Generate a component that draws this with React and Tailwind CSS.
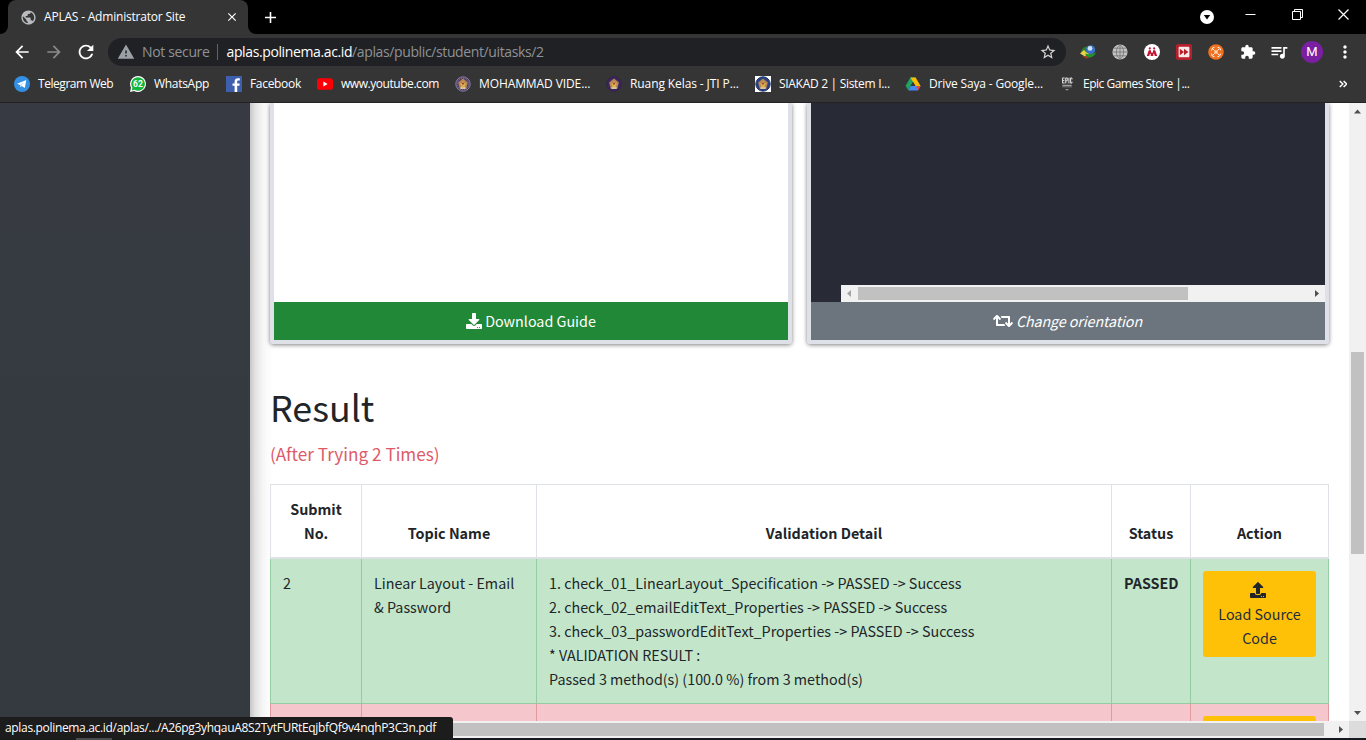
import React from "react";
import {
  MdArrowBack, MdArrowForward, MdRefresh, MdWarning, MdStarBorder, MdExtension,
  MdQueueMusic, MdMoreVert, MdPublic, MdClose, MdAdd,
} from "react-icons/md";
import { FaDownload, FaUpload, FaRetweet } from "react-icons/fa";

const ui = "font-['Open_Sans','Noto_Sans',sans-serif]";
const page = "font-['Noto_Sans_CJK_SC','Open_Sans',sans-serif]";

function Telegram() {
  return (
    <svg className="size-4" viewBox="0 0 16 16">
      <circle cx="8" cy="8" r="8" fill="#3390e5" />
      <path d="M3 7.8 12.3 4 10.8 12 7.6 9.9 6.3 11.3 6 9Z" fill="#fff" />
      <path d="M6 9 10.5 5.8 7.2 9.5 6.4 11Z" fill="#a9cdf0" />
    </svg>
  );
}

function WhatsApp() {
  return (
    <svg className="size-4" viewBox="0 0 16 16">
      <path d="M8 0a8 8 0 1 1-3.9 15L0 16l1-4.2A8 8 0 0 1 8 0Z" fill="#fff" />
      <path d="M8 1.2a6.8 6.8 0 1 1-3.5 12.6l-2.8.7.7-2.8A6.8 6.8 0 0 1 8 1.2Z" fill="#13b53c" />
      <text x="8" y="11" textAnchor="middle" fontSize="8.5" fontWeight="700" fill="#fff" fontFamily="Roboto, sans-serif">62</text>
    </svg>
  );
}

function Facebook() {
  return (
    <svg className="size-4" viewBox="0 0 16 16">
      <path d="M0 0h16v16H0Z" fill="#3d5fae" />
      <path d="M8.6 16V9.8H6.5V7.4h2.1V5.6c0-2.2 1.3-3.4 3.3-3.4.9 0 1.6.1 1.9.1v2.2h-1.3c-1 0-1.3.5-1.3 1.3v1.6h2.5l-.3 2.4h-2.2V16Z" fill="#fff" />
    </svg>
  );
}

function Youtube() {
  return (
    <svg className="size-4" viewBox="0 0 16 16">
      <rect x="0" y="2.2" width="16" height="11.6" rx="2.6" fill="#fb0007" />
      <path d="M6.4 5.6v4.8L10.6 8Z" fill="#fff" />
    </svg>
  );
}

function Crest({ ring, field, square }) {
  return (
    <svg className="size-4" viewBox="0 0 16 16">
      {square && <rect width="16" height="16" fill="#fff" />}
      <circle cx="8" cy="8" r="7.2" fill={field} stroke={ring} strokeWidth="1" />
      <circle cx="8" cy="8" r="5.8" fill="none" stroke={ring} strokeWidth=".7" strokeDasharray="1.4 .8" />
      <path d="M8 2.6 12.8 6.4 11.2 12.8H4.8L3.2 6.4Z" fill="#b98552" />
      <path d="M8 4.4 9.2 7.2 11.4 7.4 9.8 9.2 10 11.6H6L6.2 9.2 4.6 7.4 6.8 7.2Z" fill="#d9b04e" />
      <path d="M5.4 11.4h5.2v1.4H5.4Z" fill="#e8d9b0" />
      <circle cx="8" cy="7.6" r="1.1" fill="#a0403c" />
    </svg>
  );
}

function Drive() {
  return (
    <svg className="size-4" viewBox="0 0 16 16">
      <path d="M5.4 1.6h5.2L8 6.1 3.2 14.2.6 9.8Z" fill="#1fa463" />
      <path d="M5.4 1.6h5.2l5 8.4h-5.1Z" fill="#fbbc05" />
      <path d="M5.8 10h9.8L13 14.4H3.2Z" fill="#4688f4" />
      <path d="M8 6.1 10.4 10H5.7Z" fill="#36363a" />
      <path d="m13 14.4 2.6-4.4h-3.1l-1.2 1.4Z" fill="#ea4335" />
    </svg>
  );
}

function Epic() {
  return (
    <svg className="size-4" viewBox="0 0 16 16">
      <path d="M3 1h10v11H3Z" fill="#4a4a4a" />
      <path d="M3.5 2v5M3.5 2h2M3.5 4.5h1.7M3.5 7h2M6.7 7.3V2h1.6v2.8H6.7M9.9 2v5.3M13 3.4V2h-1.5v5H13V5.7" stroke="#d5d5d5" strokeWidth="1" fill="none" />
      <path d="M3.5 9.7h9" stroke="#a5a5a5" strokeWidth="1.3" />
      <path d="M6 13.2h4l-2 1.3Z" fill="#bcbcbc" />
    </svg>
  );
}

const bookmarks = [
  { w: "w-[116px]", t: "tracking-[-0.45px]", label: "Telegram Web", icon: <Telegram /> },
  { w: "w-[96px]", t: "tracking-[-0.3px]", label: "WhatsApp", icon: <WhatsApp /> },
  { w: "w-[91px]", t: "tracking-[-0.32px]", label: "Facebook", icon: <Facebook /> },
  { w: "w-[138px]", t: "tracking-[-0.45px]", label: "www.youtube.com", icon: <Youtube /> },
  { w: "w-[151px]", t: "tracking-[-0.1px]", label: "MOHAMMAD VIDE...", icon: <Crest ring="#8c7aa8" field="#4b4060" /> },
  { w: "w-[149px]", t: "tracking-[-0.1px]", label: "Ruang Kelas - JTI P...", icon: <Crest ring="#33204f" field="#3e2a66" /> },
  { w: "w-[150px]", t: "tracking-[-0.3px]", label: "SIAKAD 2 | Sistem I...", icon: <Crest ring="#22376d" field="#2c4685" square /> },
  { w: "w-[154px]", t: "tracking-[-0.16px]", label: "Drive Saya - Google...", icon: <Drive /> },
  { w: "w-[140px]", t: "tracking-[-0.5px]", label: "Epic Games Store |...", icon: <Epic /> },
];

function TabStrip() {
  return (
    <div className="flex h-[34px] items-end bg-black pl-2">
      <div className="relative flex h-[34px] w-60 items-center rounded-t-lg bg-[#353535] pl-3 pr-[9px]">
        <MdPublic className="size-[17px] text-[#b9bbbe]" />
        <span className="ml-[7px] flex-1 whitespace-nowrap text-[12px] tracking-[-0.2px] text-white">APLAS - Administrator Site</span>
        <MdClose className="size-[14px] text-white" />
        <svg className="absolute -left-2 bottom-0 size-2" viewBox="0 0 8 8"><path d="M8 0v8H0a8 8 0 0 0 8-8Z" fill="#353535" /></svg>
        <svg className="absolute -right-2 bottom-0 size-2" viewBox="0 0 8 8"><path d="M0 0v8h8a8 8 0 0 1-8-8Z" fill="#353535" /></svg>
      </div>
      <div className="flex h-[34px] w-[44px] items-center justify-center">
        <MdAdd className="size-[19px] text-white" />
      </div>
      <div className="flex h-[34px] flex-1 items-center justify-end">
        <svg className="mr-[31px] size-[14px]" viewBox="0 0 14 14">
          <circle cx="7" cy="7" r="7" fill="#fff" />
          <path d="M3.8 5h6.4L7 9.4Z" fill="#000" />
        </svg>
        <svg className="mr-9 mb-[5px] size-[11px]" viewBox="0 0 11 11"><path d="M.5 5.5h10" stroke="#fff" /></svg>
        <svg className="mr-[35px] mb-[5px] size-[11px]" viewBox="0 0 11 11"><path d="M.5 2.5h8v8h-8zM2.5 2.5v-2h8v8h-2" stroke="#fff" fill="none" /></svg>
        <svg className="mr-[17px] mb-[5px] size-[11px]" viewBox="0 0 11 11"><path d="m.5.5 10 10M10.5.5l-10 10" stroke="#fff" strokeWidth="1.2" /></svg>
      </div>
    </div>
  );
}

function Toolbar() {
  return (
    <div className="flex h-9 items-center bg-[#353535]">
      <MdArrowBack className="ml-[12px] size-5 text-white" />
      <MdArrowForward className="ml-3 size-5 text-[#8a8a8a]" />
      <MdRefresh className="ml-[11px] size-[22px] text-white" />
      <div className="ml-[11px] flex h-7 w-[958px] items-center rounded-full bg-[#202124] pl-[9px] pr-[9px]">
        <MdWarning className="size-[18px] text-[#9aa0a6]" />
        <span className="ml-[7px] text-[14px] leading-5 tracking-[-0.35px] text-[#8f9296]">Not secure</span>
        <span className="ml-[7px] h-4 w-px bg-[#5f6368]" />
        <span className="ml-[9px] flex-1 whitespace-nowrap text-[14px] leading-5 tracking-[-0.38px] text-[#8f9296]">
          <span className="text-white">aplas.polinema.ac.id</span>/aplas/public/student/uitasks/2
        </span>
        <MdStarBorder className="size-[18px] text-[#d6d6d6]" />
      </div>
      <div className="ml-[14px] flex items-center gap-4">
        <svg className="size-4" viewBox="0 0 16 16">
          <path d="M1 8.5C1 5 4.5 2 8 2.5l2 6-5 2.5Z" fill="#2c7d28" />
          <circle cx="10.6" cy="5.8" r="4.6" fill="#3b6fc8" />
          <circle cx="10" cy="4.4" r="2.4" fill="#cfe3f6" />
          <path d="M0 9.5 4 6 6.5 8.6 10 10.5 5 12.6Z" fill="#e8d24a" />
          <path d="M5.5 9.6c3 1.4 6.5.6 10.5-1.2-1 3.4-5 6-10 4.800Z" fill="#1f9527" />
          <path d="M2.5 12h4l2.5 2-3.5.4Z" fill="#a63b24" />
        </svg>
        <svg className="size-4" viewBox="0 0 16 16" fill="none">
          <circle cx="8" cy="8" r="7.6" fill="#c4c4c4" />
          <path d="M.6 8h14.8M1.8 4.2h12.4M1.8 11.8h12.4M8 .5v15M8 .6C3.2 4.4 3.2 11.6 8 15.4c4.8-3.8 4.8-11 0-14.8" stroke="#707070" strokeWidth=".8" />
        </svg>
        <svg className="size-4" viewBox="0 0 16 16">
          <circle cx="8" cy="8" r="8" fill="#fff" />
          <circle cx="5.8" cy="4.400" r="1.1" fill="#c41230" />
          <circle cx="10.2" cy="4.400" r="1.1" fill="#c41230" />
          <path d="M4.8 6.2h2.200v2.400H9V6.200h2.200l2 5.800h-2.400l-.7-2.200H9.300V12H6.700V9.800H5.900L5.200 12H2.800Z" fill="#c41230" />
        </svg>
        <svg className="size-4" viewBox="0 0 16 16">
          <rect width="16" height="16" rx="2.2" fill="#b51f2e" />
          <rect x="2.6" y="2.8" width="10.8" height="10.4" rx="1" fill="#f5e9e6" />
          <path d="M3.8 4.7 8 8l-4.2 3.3ZM8 4.7 12.4 8 8 11.3Z" fill="#b51f2e" />
        </svg>
        <svg className="size-4" viewBox="0 0 16 16" fill="none">
          <circle cx="8" cy="8" r="7.8" fill="#f0701f" />
          <path d="M3.5 6.5 4.5 4l2-.8M9.5 3.2l2.4 1 .8 2M12.6 9.5 11.5 12l-2 .8M6.5 12.8 4.300 12l-.9-2.400" stroke="#fff" strokeWidth="1" />
          <path d="m5 5 1.700 1.700M11 5 9.300 6.700M5 11l1.700-1.700M11 11 9.300 9.300" stroke="#fff" strokeWidth=".9" />
          <circle cx="8" cy="8" r="1.700" fill="#fbd9bf" />
        </svg>
        <MdExtension className="size-4 text-white" />
      </div>
      <MdQueueMusic className="ml-[13px] size-5 text-white" />
      <span className="ml-[12px] flex size-[22px] items-center justify-center rounded-full bg-[#7b1fa2] font-['Roboto',sans-serif] text-[13px] text-white">M</span>
      <MdMoreVert className="ml-[12px] size-5 text-white" />
    </div>
  );
}

function Bookmarks() {
  return (
    <div className="flex h-[33px] items-center border-b border-[#232323] bg-[#353535] pb-1 pl-[14px]">
      {bookmarks.map((b) => (
        <div key={b.label} className={`flex shrink-0 items-center gap-2 ${b.w}`}>
          {b.icon}
          <span className={`whitespace-nowrap text-[12px] leading-4 text-white ${b.t}`}>{b.label}</span>
        </div>
      ))}
      <svg className="ml-[140px] size-2 shrink-0" viewBox="0 0 8 8"><path d="m.8 1 3 3-3 3M4.6 1l3 3-3 3" stroke="#fff" strokeWidth="1.5" fill="none" /></svg>
    </div>
  );
}

const cardShadow = "shadow-[0_1px_4px_rgba(0,0,0,0.5)]";

function Cards() {
  return (
    <div className="flex gap-[15px]">
      <div className={`w-[522px] rounded-b border-x-4 border-b-4 border-[#dfe1e8] ${cardShadow}`}>
        <div className="h-[199px] bg-white" />
        <div className="flex h-[38px] items-center justify-center gap-[3px] bg-[#218838] pb-px text-[14.33px] text-white">
          <FaDownload className="size-4" />
          <span className="whitespace-nowrap">Download Guide</span>
        </div>
      </div>
      <div className={`w-[522px] rounded-b border-x-4 border-b-4 border-[#dfe1e8] ${cardShadow}`}>
        <div className="flex h-[199px] items-end bg-[#282a36] pl-[30px]">
          <div className="flex h-[17px] flex-1 items-center bg-[#f1f1f1]">
            <svg className="size-[17px]" viewBox="0 0 17 17"><path d="M10 5v7L6 8.5Z" fill="#a3a3a3" /></svg>
            <div className="h-[13px] w-[330px] bg-[#c1c1c1]" />
            <div className="flex-1" />
            <svg className="size-[17px]" viewBox="0 0 17 17"><path d="M7 5v7l4-3.5Z" fill="#505050" /></svg>
          </div>
        </div>
        <div className="flex h-[38px] items-center justify-center gap-[3px] bg-[#6c757d] pb-px pr-px text-[14.3px] text-white">
          <FaRetweet className="size-5" />
          <span className="whitespace-nowrap italic tracking-[-0.1px]">Change orientation</span>
        </div>
      </div>
    </div>
  );
}

const action = "w-[113px] shrink-0 bg-[#ffc107]";

function LoadButton() {
  return (
    <button className={`flex h-[86px] flex-col items-center rounded-[3px] pt-[7px] text-center text-[14.33px] leading-6 text-[#1f2d3d] ${action}`}>
      <span className="flex h-6 items-center pr-[3px]"><FaUpload className="size-4 text-[#212529]" /></span>
      <span className="px-3">Load Source Code</span>
    </button>
  );
}

const head = "border-l border-t border-b-2 border-[#dee2e6] px-3 pb-3 align-bottom font-bold";
const cell = "border-l border-[#94cda3] px-3 pt-3";
const failedCell = "border-l border-t border-l-[#e09aa2] border-t-[#94cda3]";

function ResultTable() {
  return (
    <table className="w-[1059px] table-fixed border-separate border-spacing-0 text-[14.33px] leading-6 text-[#212529]">
      <colgroup>
        <col className="w-[91px]" />
        <col className="w-[175px]" />
        <col className="w-[575px]" />
        <col className="w-[79px]" />
        <col className="w-[139px]" />
      </colgroup>
      <thead>
        <tr className="h-[75px]">
          <th className={head}>Submit No.</th>
          <th className={head}>Topic Name</th>
          <th className={head}>Validation Detail</th>
          <th className={head}>Status</th>
          <th className={`${head} border-r`}>Action</th>
        </tr>
      </thead>
      <tbody>
        <tr className="h-36 bg-[#c3e6cb] align-top">
          <td className={cell}>2</td>
          <td className={`whitespace-nowrap ${cell}`}>Linear Layout - Email<br />&amp; Password</td>
          <td className={cell}>
            <p>1. check_01_LinearLayout_Specification -&gt; PASSED -&gt; Success</p>
            <p>2. check_02_emailEditText_Properties -&gt; PASSED -&gt; Success</p>
            <p>3. check_03_passwordEditText_Properties -&gt; PASSED -&gt; Success</p>
            <p>* VALIDATION RESULT :</p>
            <p>Passed 3 method(s) (100.0 %) from 3 method(s)</p>
          </td>
          <td className={`whitespace-nowrap font-bold ${cell}`}>PASSED</td>
          <td className={`border-r ${cell}`}><LoadButton /></td>
        </tr>
        <tr className="h-[18px] bg-[#f5c6cb] align-top">
          <td className={failedCell} />
          <td className={failedCell} />
          <td className={failedCell} />
          <td className={failedCell} />
          <td className={`border-r border-r-[#e09aa2] px-3 pt-3 ${failedCell}`}>
            <div className={`h-[5px] rounded-t-[3px] ${action}`} />
          </td>
        </tr>
      </tbody>
    </table>
  );
}

export default function App() {
  return (
    <div className={`relative flex h-[740px] w-[1366px] flex-col overflow-hidden ${ui}`}>
      <TabStrip />
      <Toolbar />
      <Bookmarks />
      <div className="flex h-[618px]">
        <aside className="w-[250px] bg-[linear-gradient(#373a42,#343a40)]" />
        <main className={`h-full w-[1099px] overflow-hidden bg-white bg-[linear-gradient(90deg,#c6c6c6,#e2e2e2_5px,#f2f2f2_11px,#fbfbfb_17px,#fff_24px)] pl-5 ${page}`}>
          <Cards />
          <h1 className="mt-[38px] text-[35.8px] leading-[48px] text-[#212529]">Result</h1>
          <p className="mt-[12px] text-[17.16px] leading-6 text-[#dd5a69]">(After Trying 2 Times)</p>
          <div className="mt-[18px]"><ResultTable /></div>
        </main>
        <div className="flex w-[17px] flex-col items-center bg-[#f1f1f1]">
          <svg className="size-[17px]" viewBox="0 0 17 17"><path d="M5 10.5h7L8.5 6.5Z" fill="#505050" /></svg>
          <div className="mt-[232px] h-[202px] w-[13px] bg-[#c1c1c1]" />
          <div className="flex-1" />
          <svg className="size-[17px]" viewBox="0 0 17 17"><path d="M5 7h7l-3.5 4Z" fill="#505050" /></svg>
        </div>
      </div>
      <div className="flex h-[17px] items-center bg-[#f1f1f1]">
        <div className="h-[13px] w-[1324px] bg-[#c1c1c1]" />
        <svg className="ml-2 size-[17px]" viewBox="0 0 17 17"><path d="M7 5v7l4-3.5Z" fill="#505050" /></svg>
        <div className="ml-auto size-[17px] bg-[#dcdcdc]" />
      </div>
      <div className="h-[2px] bg-[#17191f]" />
      <div className="absolute bottom-0 left-0 flex h-[23px] w-[453px] items-center rounded-tr-[3px] bg-[#1c1c1c] pb-px pl-[5px] text-[12px] tracking-[-0.33px] text-white">
        <span className="whitespace-nowrap">aplas.polinema.ac.id/aplas/.../A26pg3yhqauA8S2TytFURtEqjbfQf9v4nqhP3C3n.pdf</span>
        <span className="absolute bottom-0 left-[76px] h-[2px] w-9 bg-[#4a4b4e]" />
      </div>
    </div>
  );
}
